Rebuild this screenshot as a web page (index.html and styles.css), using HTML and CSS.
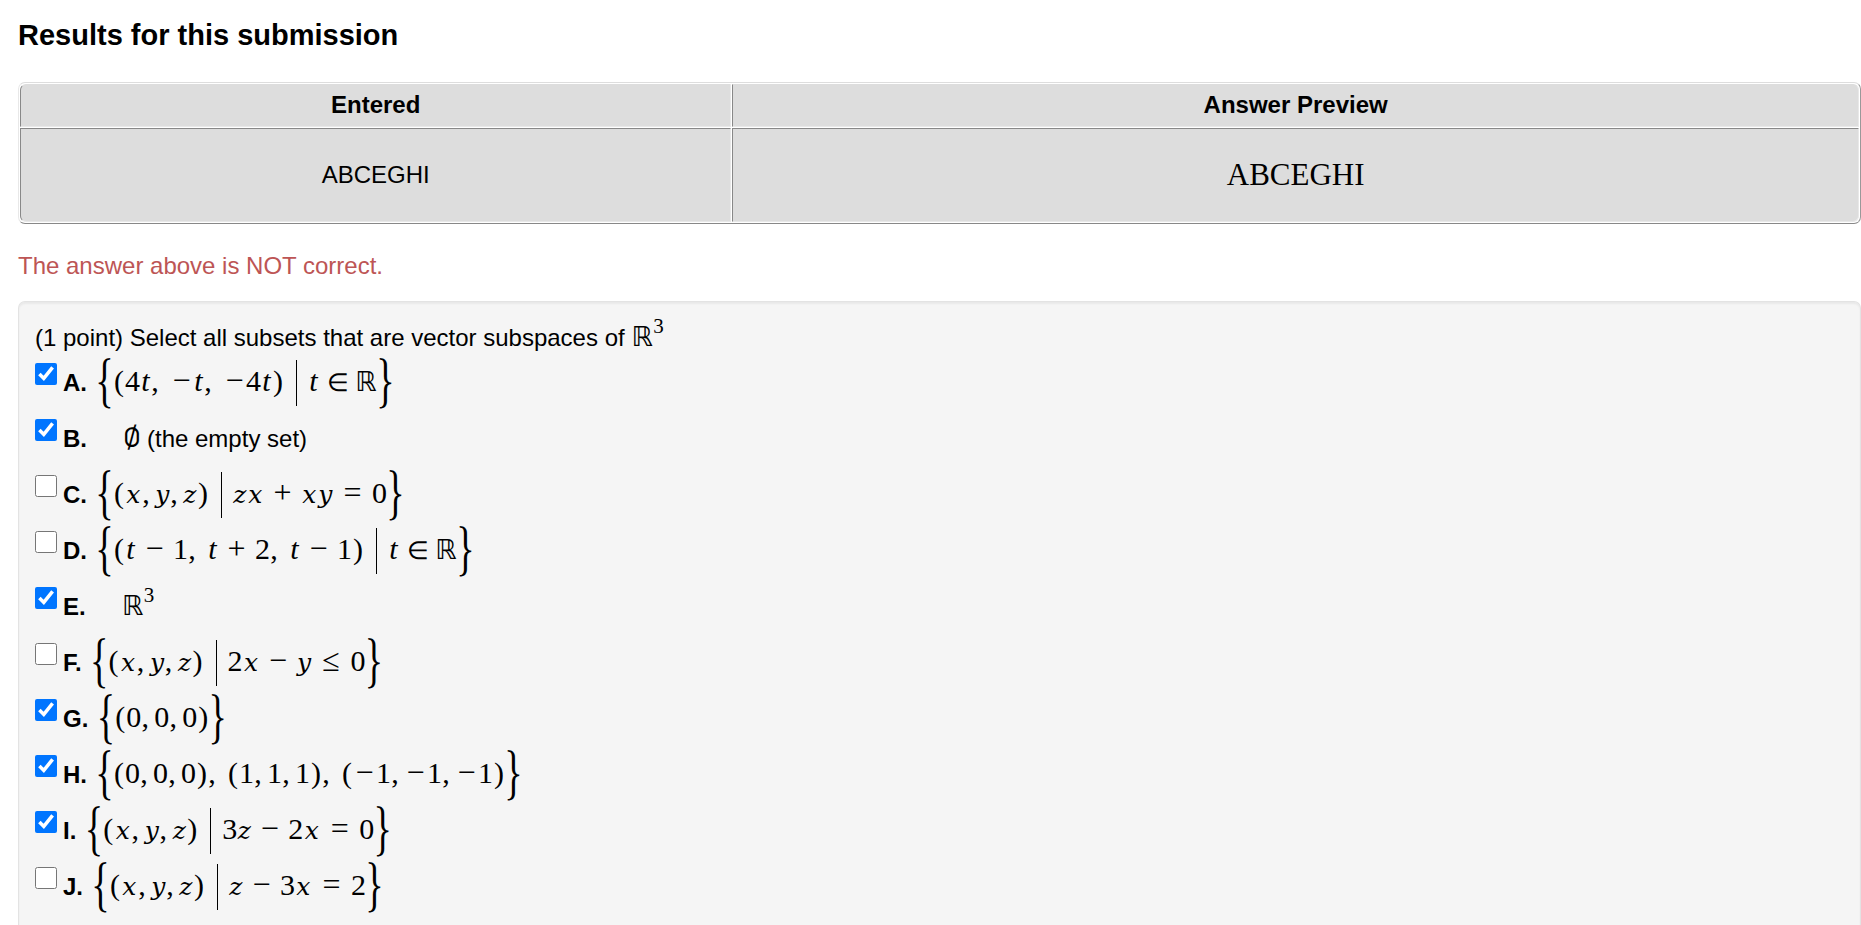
FILE: index.html
```html
<!DOCTYPE html>
<html lang="en">
<head>
<meta charset="utf-8">
<title>Results for this submission</title>
<link rel="stylesheet" href="styles.css">
</head>
<body>
<main>
<h3 class="heading">Results for this submission</h3>
<table class="results">
<thead><tr><th class="entered">Entered</th><th>Answer Preview</th></tr></thead>
<tbody><tr><td>ABCEGHI</td><td class="preview">ABCEGHI</td></tr></tbody>
</table>
<p class="alert">The answer above is NOT correct.</p>
<form class="problem">
<p class="intro">(1 point) Select all subsets that are vector subspaces of <span class="m"><span class="pow"><span class="bb">ℝ</span><sup>3</sup></span></span></p>
<div class="choice"><input type="checkbox" id="a" checked><label for="a"><b>A.</b><span class="m"><math><mo minsize="51px">{</mo></math><span class="p">(</span>4<i class="t">t</i><span class="c wide">,</span><span class="o">−</span><i class="t">t</i><span class="c wide">,</span><span class="o">−</span>4<i class="t">t</i><span class="p">)</span><span class="bar"></span><i class="t">t</i><span class="in">∈</span><span class="bb">ℝ</span><math><mo minsize="51px">}</mo></math></span></label></div>
<div class="choice"><input type="checkbox" id="b" checked><label for="b"><b>B.</b><span class="m short"><span class="empty">∅</span></span><span class="note">(the empty set)</span></label></div>
<div class="choice"><input type="checkbox" id="c"><label for="c"><b>C.</b><span class="m"><math><mo minsize="51px">{</mo></math><span class="p">(</span><i class="x">x</i><span class="c">,</span><i class="y">y</i><span class="c">,</span><i class="z">z</i><span class="p">)</span><span class="bar"></span><i class="z">z</i><i class="x">x</i><span class="o bin">+</span><i class="x">x</i><i class="y">y</i><span class="o rel">=</span>0<math><mo minsize="51px">}</mo></math></span></label></div>
<div class="choice"><input type="checkbox" id="d"><label for="d"><b>D.</b><span class="m"><math><mo minsize="51px">{</mo></math><span class="p">(</span><i class="t">t</i><span class="o bin">−</span>1<span class="c wide">,</span><i class="t">t</i><span class="o bin">+</span>2<span class="c wide">,</span><i class="t">t</i><span class="o bin">−</span>1<span class="p">)</span><span class="bar"></span><i class="t">t</i><span class="in">∈</span><span class="bb">ℝ</span><math><mo minsize="51px">}</mo></math></span></label></div>
<div class="choice"><input type="checkbox" id="e" checked><label for="e"><b>E.</b><span class="m short"><span class="pow"><span class="bb">ℝ</span><sup>3</sup></span></span></label></div>
<div class="choice"><input type="checkbox" id="f"><label for="f"><b>F.</b><span class="m"><math><mo minsize="51px">{</mo></math><span class="p">(</span><i class="x">x</i><span class="c">,</span><i class="y">y</i><span class="c">,</span><i class="z">z</i><span class="p">)</span><span class="bar"></span>2<i class="x">x</i><span class="o bin">−</span><i class="y">y</i><span class="o rel">≤</span>0<math><mo minsize="51px">}</mo></math></span></label></div>
<div class="choice"><input type="checkbox" id="g" checked><label for="g"><b>G.</b><span class="m"><math><mo minsize="51px">{</mo></math><span class="p">(</span>0<span class="c">,</span>0<span class="c">,</span>0<span class="p">)</span><math><mo minsize="51px">}</mo></math></span></label></div>
<div class="choice"><input type="checkbox" id="h" checked><label for="h"><b>H.</b><span class="m"><math><mo minsize="51px">{</mo></math><span class="p">(</span>0<span class="c">,</span>0<span class="c">,</span>0<span class="p">)</span><span class="c wide">,</span><span class="p">(</span>1<span class="c">,</span>1<span class="c">,</span>1<span class="p">)</span><span class="c wide">,</span><span class="p">(</span><span class="o">−</span>1<span class="c">,</span><span class="o">−</span>1<span class="c">,</span><span class="o">−</span>1<span class="p">)</span><math><mo minsize="51px">}</mo></math></span></label></div>
<div class="choice"><input type="checkbox" id="i" checked><label for="i"><b>I.</b><span class="m"><math><mo minsize="51px">{</mo></math><span class="p">(</span><i class="x">x</i><span class="c">,</span><i class="y">y</i><span class="c">,</span><i class="z">z</i><span class="p">)</span><span class="bar"></span>3<i class="z">z</i><span class="o bin">−</span>2<i class="x">x</i><span class="o rel">=</span>0<math><mo minsize="51px">}</mo></math></span></label></div>
<div class="choice"><input type="checkbox" id="j"><label for="j"><b>J.</b><span class="m"><math><mo minsize="51px">{</mo></math><span class="p">(</span><i class="x">x</i><span class="c">,</span><i class="y">y</i><span class="c">,</span><i class="z">z</i><span class="p">)</span><span class="bar"></span><i class="z">z</i><span class="o bin">−</span>3<i class="x">x</i><span class="o rel">=</span>2<math><mo minsize="51px">}</mo></math></span></label></div>
</form>
</main>
</body>
</html>
```
FILE: styles.css
```css
* { box-sizing: border-box; }
body { margin: 0; background: #fff; color: #000; font: 24px/30px "Liberation Sans", Arial, sans-serif; }
main { min-height: 100vh; padding: 18px 0 0 18px; display: flex; flex-direction: column; }
.heading { margin: 0 0 30px; font-size: 29px; line-height: 34px; }
.results { width: 100%; border-collapse: separate; border-spacing: 1px; border: 1px solid; border-color: #ddd #999 #888 #e8e8e8; border-radius: 7px; text-align: center; }
.results th, .results td { padding: 0 0 1px; height: 43px; background: #ddd; border: 1px solid; border-color: #ddd #e8e8e8 #e8e8e8 #888; }
.results td { height: 94px; border-top-color: #888; }
.results .entered { width: 38.7%; border-top-left-radius: 6px; }
.results th:last-child { border-top-right-radius: 6px; }
.results td:first-child { border-bottom-left-radius: 6px; }
.results td:last-child { border-bottom-right-radius: 6px; }
.results .preview { font: 31px "Liberation Serif", serif; }
.alert { margin: 27px 0 20px; color: #bd5555; }
.problem { flex: 1; padding: 18px 17px 0 16px; background: #f5f5f5; border: 1px solid #e3e3e3; border-bottom: 0; border-radius: 7px 7px 0 0; box-shadow: inset 0 2px 2px rgba(0, 0, 0, .05); }
.intro { margin: 0; line-height: 35px; }
.choice { display: flex; height: 56px; }
.choice input { width: 22px; height: 22px; margin: 8px 6px 0 0; }
.choice label { display: flex; align-items: baseline; line-height: 56px; }
.note { margin-left: 9px; }

/* Formula tokens: each symbol is centred in its own advance width. */
.m { display: inline-flex; align-items: baseline; font-family: "Liberation Serif", serif; font-size: 30px; line-height: 0; }
.choice .m { margin-left: 9px; }
.choice .short { margin-left: 36px; }
.m span, .m i { display: inline-block; text-align: center; }
.m math { font-family: "DejaVu Math TeX Gyre", serif; font-size: 28px; }
.m i { font-family: "DejaVu Serif", serif; font-size: 25px; }
.m .x { width: 17px; }
.m .y { width: 15px; }
.m .z { width: 14px; }
.m .t { width: 11px; font-family: "Liberation Serif", serif; font-size: 30px; }
.m .p { width: 12px; }
.m .c { width: 8px; margin-right: 5px; }
.m .wide { margin-right: 11px; }
.m .o { width: 23px; font-size: 32px; }
.m .bin { margin: 0 7px; }
.m .rel { margin: 0 8px; }
.m .in { width: 20px; margin: 0 8px; font-size: 25px; }
.m .bb { width: 22px; font-family: "DejaVu Sans", sans-serif; font-size: 27px; }
.m .bar { align-self: center; width: 1px; height: 46px; margin: 0 11px 0 12px; background: #000; }
.m .empty { width: 15px; font-family: "DejaVu Math TeX Gyre", serif; font-size: 27px; }
.m sup { font-size: 21px; line-height: 0; vertical-align: 13px; }
```
